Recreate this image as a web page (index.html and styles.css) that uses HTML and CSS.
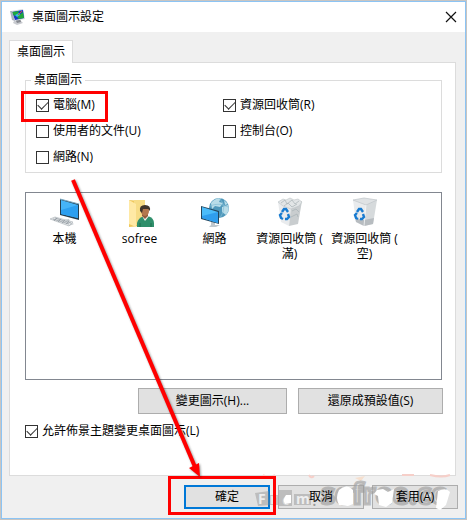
FILE: index.html
```html
<!DOCTYPE html>
<html lang="zh-Hant">
<head>
<meta charset="utf-8">
<title>桌面圖示設定</title>
<link rel="stylesheet" href="styles.css">
</head>
<body>
<main class="window">
  <header class="titlebar">
    <svg class="app-icon" width="16" height="16" viewBox="0 0 16 16" aria-hidden="true">
      <path d="M4 12l6-1 3 3-6 2-4-2z" fill="#c9cbd0"/>
      <path d="M5 10l5-1 1 4-4 1z" fill="#85888f"/>
      <path d="M1 2l12-2 2 10-11 2z" fill="#d3d8e0"/>
      <path d="M2 3l11-2 1 8-9 2z" fill="#1738c8"/>
      <path d="M2 3l7-1-1 3-4 2zM7 8l6-5 1 6-5 1z" fill="#20a83b"/>
      <path d="M5 6l4-2 1 2-3 2z" fill="#35c6d9"/>
      <path d="M8 6l4-4" stroke="#e0572b" stroke-width="1"/>
      <path d="M0 2l2 0 3 10-3-1z" fill="#abb2bd"/>
    </svg>
    <h1 class="title">桌面圖示設定</h1>
    <button class="close" type="button" aria-label="關閉">
      <svg width="12" height="12" viewBox="0 0 12 12"><path d="M1 1l10 10M11 1L1 11" stroke="#111" stroke-width="1.2"/></svg>
    </button>
  </header>
  <form class="content">
    <div class="tabs" role="tablist"><button class="tab" type="button" role="tab" aria-selected="true">桌面圖示</button></div>
    <section class="panel">
      <fieldset class="group">
        <legend>桌面圖示</legend>
        <div class="checks">
          <label class="check"><input type="checkbox" checked>電腦(M)</label>
          <label class="check"><input type="checkbox" checked>資源回收筒(R)</label>
          <label class="check"><input type="checkbox">使用者的文件(U)</label>
          <label class="check"><input type="checkbox">控制台(O)</label>
          <label class="check"><input type="checkbox">網路(N)</label>
        </div>
      </fieldset>
      <ul class="icons">
        <li>
          <svg width="32" height="32" viewBox="0 0 32 32" aria-hidden="true">
            <path d="M15 23l5-1 1 3 4 2-5 2-6-3z" fill="#c4c9cd"/>
            <path d="M11 2l19 5v16l-19-5z" fill="#263e4e"/>
            <path d="M12 3l17 5v13l-17-4z" fill="#45b4f8"/>
            <path d="M12 13l17-5v13l-17-4z" fill="#2c9ff0"/>
            <path d="M11 2l19 5" stroke="#7aaac4"/>
            <path d="M1 22l5-2 18 5-4 4z" fill="#e2e5e7" stroke="#a9b0b5" stroke-width=".6"/>
            <path d="M4 22l16 5M6 21l16 5M8 21l-3 3M12 22l-3 3M16 23l-3 3M20 24l-3 3" stroke="#8e979d" stroke-width=".7"/>
          </svg>
          <span>本機</span>
        </li>
        <li>
          <svg width="32" height="32" viewBox="0 0 32 32" aria-hidden="true">
            <path d="M5 3l12 1v25l-12 1z" fill="#efc85d"/>
            <path d="M10 3h11v25h-11z" fill="#f7dc86"/>
            <path d="M5 3l7 4v23l-7-3z" fill="#ffe9a5"/>
            <path d="M13 30v-4q1-5 7-7h4q6 2 6 7v4z" fill="#2f8f6b"/>
            <path d="M18 19l3 5 4-5z" fill="#f2f2ef"/>
            <path d="M18 15h6v4l-3 3-3-3z" fill="#925c3d"/>
            <ellipse cx="21" cy="14" rx="4" ry="5" fill="#b4774e"/>
            <path d="M16 14q-1-6 5-6 6 0 5 6l-2-2-5 0-1 4z" fill="#40352c"/>
            <path d="M16 26v4M27 26v4" stroke="#1e6e4f"/>
          </svg>
          <span>sofree</span>
        </li>
        <li>
          <svg width="32" height="32" viewBox="0 0 32 32" aria-hidden="true">
            <circle cx="20" cy="11" r="10" fill="#4f98bb"/>
            <path d="M12 6q4-5 10-5l-2 4 4 1-3 4-5-1-3 3zM23 10l6-2q2 5-2 10l-4-3zM25 3l4 4-3 1z" fill="#b8dce8"/>
            <path d="M20 1q9 8 1 20M11 9q9-4 18 1" fill="none" stroke="#84bdd5" stroke-width=".7"/>
            <path d="M12 24l4 1v3l5 0-4 2h-7l2-2z" fill="#bfc8ce"/>
            <path d="M2 9l18 5v13l-18-5z" fill="#24465e"/>
            <path d="M3 10l16 5v11l-16-5z" fill="#4bbcfa"/>
            <path d="M3 19l16-4v11l-16-5z" fill="#2f9eee"/>
          </svg>
          <span>網路</span>
        </li>
        <li>
          <svg width="32" height="32" viewBox="0 0 32 32" aria-hidden="true">
            <path d="M4 5l13 4-2 20-8-4z" fill="#e9ebed"/>
            <path d="M17 9l11-5-4 23-9 2z" fill="#c9cdcf"/>
            <path d="M4 5l5-3 3 1 4-2 4 2 4-1 4 3-3 4-8 3-8-3z" fill="#e2e5e6" stroke="#bcc3c6" stroke-width=".6"/>
            <path d="M7 6l4-3 2 4 5-4 3 4 4-3M10 9l4-3 4 4 5-3M18 14l4-2 3 3M17 20l6-3 1 3" fill="none" stroke="#a8b1b5" stroke-width=".7"/>
            <path d="M8 15l2-3h2l2 3M14 17l1 3-2 2h-2M9 22l-2-1-1-3 2-2" fill="none" stroke="#187bd0" stroke-width="2.400"/>
          </svg>
          <span>資源回收筒 (<br>滿)</span>
        </li>
        <li>
          <svg width="32" height="32" viewBox="0 0 32 32" aria-hidden="true">
            <path d="M4 3l13 4-2 22-8-4z" fill="#e9ebed"/>
            <path d="M17 7l11-4-4 24-9 2z" fill="#d6dadc"/>
            <path d="M4 3l11-2 13 2-11 5z" fill="#dfe2e4" stroke="#bec4c8" stroke-width=".7"/>
            <path d="M6 21l9 2 10-2-1 6-9 2-8-4z" fill="#b7bcc0"/>
            <path d="M17 8l-2 21" stroke="#f5f6f7" stroke-width=".8"/>
            <path d="M8 15l2-3h2l2 3M14 17l1 3-2 2h-2M9 22l-2-1-1-3 2-2" fill="none" stroke="#187bd0" stroke-width="2.400"/>
          </svg>
          <span>資源回收筒 (<br>空)</span>
        </li>
      </ul>
      <div class="actions">
        <button class="btn" type="button">變更圖示(H)...</button>
        <button class="btn" type="button">還原成預設值(S)</button>
      </div>
      <label class="check"><input type="checkbox" checked>允許佈景主題變更桌面圖示(L)</label>
    </section>
    <footer class="footer">
      <button class="btn primary" type="submit"><span>確定</span></button>
      <button class="btn" type="button"><span>取消</span></button>
      <button class="btn" type="button"><span>套用(A)</span></button>
    </footer>
  </form>
</main>
<svg class="annotations" width="467" height="520" viewBox="0 0 467 520" aria-hidden="true">
  <g class="watermark">
    <path d="M263 475q5 4 12 0M309 475q2 4 5 1M402 475h12M430 475q12 3 20 0" fill="none" stroke="#f6cfc9" stroke-width="2"/>
    <path d="M355 478l10-2-4 5z" fill="#f5dfce"/>
    <path d="M255 493l14-2 1 14-12 1zM270 495h8v10h-8zM279 490h13v16h-13zM294 494h17v11h-17z" fill="#888" fill-opacity=".4"/>
    <g fill="#eee" font-size="14" font-weight="700"><text x="258" y="504">F</text><text x="270" y="504">r</text><text x="296" y="504">m</text></g>
    <text x="282" y="505" fill="#ddd" font-size="15">c</text>
    <text x="312" y="506" fill="#999" font-size="18">.</text>
    <text class="brand" x="321" y="504">sofree.cc</text>
    <g fill="#fff">
      <path d="M286 495l5 0v8l-6 1q-3-4 1-9z"/>
      <path d="M339 490q5-5 10-3l4 3v14l-5 2-9-1q-4-7 0-15z"/>
      <path d="M377 490l6-1 5 3 6-3-2 14-6 4-7-2-1-9-4-2z"/>
      <path d="M438 491q8-4 12 1l-4 13-6 5-4-2z"/>
    </g>
  </g>
  <g class="marks">
    <path d="M22.500 92.500h84v28h-84zM169.500 477.500h105v36h-105z" fill="none" stroke="#f00" stroke-width="3"/>
    <g class="arrow"><path d="M73 180l122 287" stroke="#f00" stroke-width="4"/><path d="M200 477l-11-9 10-5z" fill="#f00"/></g>
  </g>
</svg>
</body>
</html>
```
FILE: styles.css
```css
* { box-sizing: border-box; }

body {
  position: relative;
  display: flex;
  min-height: 100vh;
  margin: 0;
  padding: 1px;
  background: #c8c5c2;
  color: #000;
  font: 12px/16px "Open Sans", "Noto Sans CJK TC", sans-serif;
}

button, input { margin: 0; font: inherit; color: inherit; }

.window {
  display: flex;
  flex: 1;
  flex-direction: column;
  border: 1px solid #8cc4f4;
  background: #f0f0f0;
}

.titlebar {
  display: flex;
  align-items: center;
  height: 30px;
  padding: 0 8px;
  background: #fff;
}

.title { flex: 1; margin: 0 0 0 6px; font-size: 12px; font-weight: 400; }

.close {
  display: flex;
  padding: 0;
  border: 0;
  background: none;
}

.content {
  display: flex;
  flex: 1;
  flex-direction: column;
  padding: 8px 7px 9px;
}

.tabs { display: flex; }

.tab {
  z-index: 1;
  height: 23px;
  margin-bottom: -1px;
  padding: 0 7px;
  border: 1px solid #dcdcdc;
  border-bottom: 0;
  background: #fff;
}

.panel {
  display: flex;
  flex: 1;
  flex-direction: column;
  margin-right: 2px;
  padding: 9px 13px 36px 15px;
  border: 1px solid #dcdcdc;
  background: #fff;
}

.group {
  min-width: 0;
  margin: 0 0 19px;
  padding: 4px 10px 2px;
  border: 1px solid #dcdcdc;
}

.group legend { margin-left: -5px; padding: 0 3px; }

.checks {
  display: grid;
  grid-template-columns: 187px 1fr;
  grid-auto-rows: 26px;
}

.check { display: flex; align-items: center; gap: 4px; }

.check input {
  appearance: none;
  display: grid;
  place-items: center;
  width: 13px;
  height: 13px;
  border: 1px solid #333;
  background: #fff;
}

.check input:checked::before {
  content: "";
  width: 9px;
  height: 5px;
  margin-bottom: 3px;
  border: solid #333;
  border-width: 0 0 1px 1px;
  transform: rotate(-45deg);
}

.icons {
  display: flex;
  flex: 1;
  margin: 0;
  padding: 4px 1px;
  border: 1px solid #828790;
  list-style: none;
}

.icons li {
  display: flex;
  flex: 0 0 75px;
  flex-direction: column;
  align-items: center;
  line-height: 15px;
  text-align: center;
  white-space: nowrap;
}

.icons span { margin-top: 2px; }

.actions {
  display: grid;
  grid-template-columns: 149px 145px;
  justify-content: end;
  gap: 11px;
  margin: 8px -1px 9px 0;
}

.btn {
  height: 26px;
  padding: 0;
  border: 1px solid #adadad;
  background: #e1e1e1;
}

.footer {
  display: grid;
  grid-template-columns: repeat(3, 86px);
  justify-content: end;
  gap: 8px;
  padding-top: 9px;
}

.footer .btn { height: 24px; }
.footer .primary { border: 2px solid #0078d7; }

/* Labels stay readable above the watermark layer. */
.footer span { position: relative; z-index: 2; }

.annotations {
  position: absolute;
  z-index: 1;
  top: 0;
  left: 0;
  pointer-events: none;
}

.watermark .brand {
  fill: #d5d5d5;
  fill-opacity: 0.4;
  stroke: #999;
  stroke-opacity: 0.6;
  stroke-width: 3;
  font-size: 28px;
  font-weight: 700;
}

.arrow { filter: drop-shadow(1px 1px 1px rgba(0, 0, 0, 0.4)); }
```
